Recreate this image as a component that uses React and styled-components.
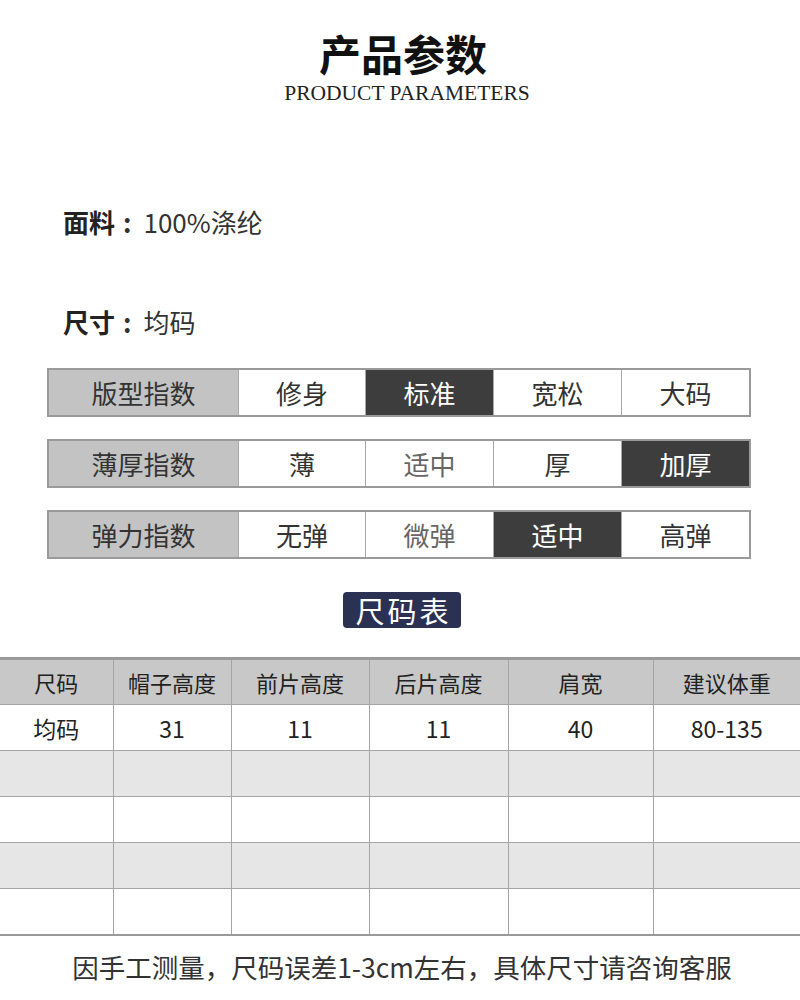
import React from 'react';
import styled, { createGlobalStyle } from 'styled-components';

const GlobalStyle = createGlobalStyle`
  html, body {
    margin: 0;
    padding: 0;
    background: #fff;
  }
  body {
    font-family: "Noto Sans CJK SC", "Noto Sans", sans-serif;
    color: #333;
  }
`;

const indexRows = [
  { label: '版型指数', options: ['修身', '标准', '宽松', '大码'], active: 1 },
  { label: '薄厚指数', options: ['薄', '适中', '厚', '加厚'], active: 3, light: [1] },
  { label: '弹力指数', options: ['无弹', '微弹', '适中', '高弹'], active: 2, light: [1] },
];

const sizeHead = ['尺码', '帽子高度', '前片高度', '后片高度', '肩宽', '建议体重'];
const sizeRows = [
  ['均码', '31', '11', '11', '40', '80-135'],
  ['', '', '', '', '', ''],
  ['', '', '', '', '', ''],
  ['', '', '', '', '', ''],
  ['', '', '', '', '', ''],
];
const colWidths = [113, 118, 138, 139, 145, 147];

const App = () => {
  return (
    <>
      <GlobalStyle />
      <Page>
        <Header>
          <Title>产品参数</Title>
          <SubTitle>PRODUCT PARAMETERS</SubTitle>
        </Header>

        <InfoLine>
          <InfoKey>面料</InfoKey>
          <Colon>:</Colon>100%涤纶
        </InfoLine>
        <InfoLine $second>
          <InfoKey>尺寸</InfoKey>
          <Colon>:</Colon>均码
        </InfoLine>

        <IndexList>
          {indexRows.map((row) => (
            <IndexRow key={row.label}>
              <IndexLabel>{row.label}</IndexLabel>
              {row.options.map((opt, i) => (
                <IndexCell
                  key={opt + i}
                  $active={i === row.active}
                  $light={row.light && row.light.includes(i)}
                >
                  {opt}
                </IndexCell>
              ))}
            </IndexRow>
          ))}
        </IndexList>

        <BadgeWrap>
          <Badge>尺码表</Badge>
        </BadgeWrap>

        <SizeTable>
          <colgroup>
            {colWidths.map((w, i) => (
              <col key={i} style={{ width: w }} />
            ))}
          </colgroup>
          <thead>
            <tr>
              {sizeHead.map((h) => (
                <HeadCell key={h}>{h}</HeadCell>
              ))}
            </tr>
          </thead>
          <tbody>
            {sizeRows.map((r, ri) => (
              <BodyRow key={ri} $shade={ri % 2 === 1}>
                {r.map((c, ci) => (
                  <BodyCell key={ci}>{c}</BodyCell>
                ))}
              </BodyRow>
            ))}
          </tbody>
        </SizeTable>

        <Footnote>因手工测量，尺码误差1-3cm左右，具体尺寸请咨询客服</Footnote>
      </Page>
    </>
  );
};

const Page = styled.div`
  width: 800px;
  height: 1000px;
  overflow: hidden;
  background: #fff;
`;

const Header = styled.div`
  display: flex;
  flex-direction: column;
  align-items: center;
  padding-top: 25px;
  padding-left: 6px;
`;

const Title = styled.div`
  font-size: 42px;
  font-weight: 700;
  line-height: 56px;
  color: #111;
`;

const SubTitle = styled.div`
  font-family: "Liberation Serif", "Times New Roman", serif;
  font-size: 21.5px;
  line-height: 24px;
  color: #222;
  padding-left: 8px;
`;

const InfoLine = styled.div`
  font-size: 26px;
  line-height: 36px;
  color: #333;
  padding-left: 63px;
  margin-top: ${(p) => (p.$second ? '64px' : '99px')};
`;

const InfoKey = styled.span`
  font-weight: 700;
  color: #222;
`;

const Colon = styled.span`
  font-weight: 700;
  color: #333;
  margin: 0 12px 0 8px;
`;

const IndexList = styled.div`
  display: flex;
  flex-direction: column;
  gap: 22px;
  margin: 28px 0 0 47px;
  width: 704px;
`;

const IndexRow = styled.div`
  display: grid;
  grid-template-columns: 189px 127px 128px 128px 1fr;
  height: 49px;
  border: 2px solid #9a9a9a;
  box-sizing: border-box;
`;

const IndexLabel = styled.div`
  display: flex;
  align-items: center;
  justify-content: center;
  background: #c3c3c3;
  font-size: 26px;
  color: #333;
`;

const IndexCell = styled.div`
  display: flex;
  align-items: center;
  justify-content: center;
  border-left: 1px solid #a8a8a8;
  font-size: 26px;
  background: ${(p) => (p.$active ? '#3d3d3d' : '#fff')};
  color: ${(p) => (p.$active ? '#fff' : p.$light ? '#666' : '#333')};
`;

const BadgeWrap = styled.div`
  display: flex;
  justify-content: center;
  margin-top: 33px;
  padding-left: 4px;
`;

const Badge = styled.div`
  background: #2b3152;
  color: #fff;
  font-size: 29px;
  line-height: 36px;
  padding: 0 9px 0 12px;
  border-radius: 4px;
  letter-spacing: 3px;
`;

const SizeTable = styled.table`
  margin-top: 29px;
  width: 800px;
  border-collapse: collapse;
  table-layout: fixed;
  border-top: 3px solid #9a9a9a;
  border-bottom: 2px solid #9a9a9a;
`;

const HeadCell = styled.th`
  height: 44px;
  padding: 0;
  background: #c8c8c8;
  font-weight: 400;
  font-size: 22px;
  color: #222;
  text-align: center;
  border-left: 1px solid #a5a5a5;
  border-bottom: 1px solid #a5a5a5;
  &:first-child {
    border-left: none;
  }
`;

const BodyRow = styled.tr`
  background: ${(p) => (p.$shade ? '#e6e6e6' : '#fff')};
`;

const BodyCell = styled.td`
  height: 45px;
  padding: 0;
  font-size: 23px;
  color: #222;
  text-align: center;
  border-left: 1px solid #a5a5a5;
  border-bottom: 1px solid #a5a5a5;
  &:first-child {
    border-left: none;
  }
`;

const Footnote = styled.div`
  margin-top: 13px;
  text-align: center;
  font-size: 26.5px;
  line-height: 36px;
  color: #333;
  padding-left: 4px;
`;

export default App;
